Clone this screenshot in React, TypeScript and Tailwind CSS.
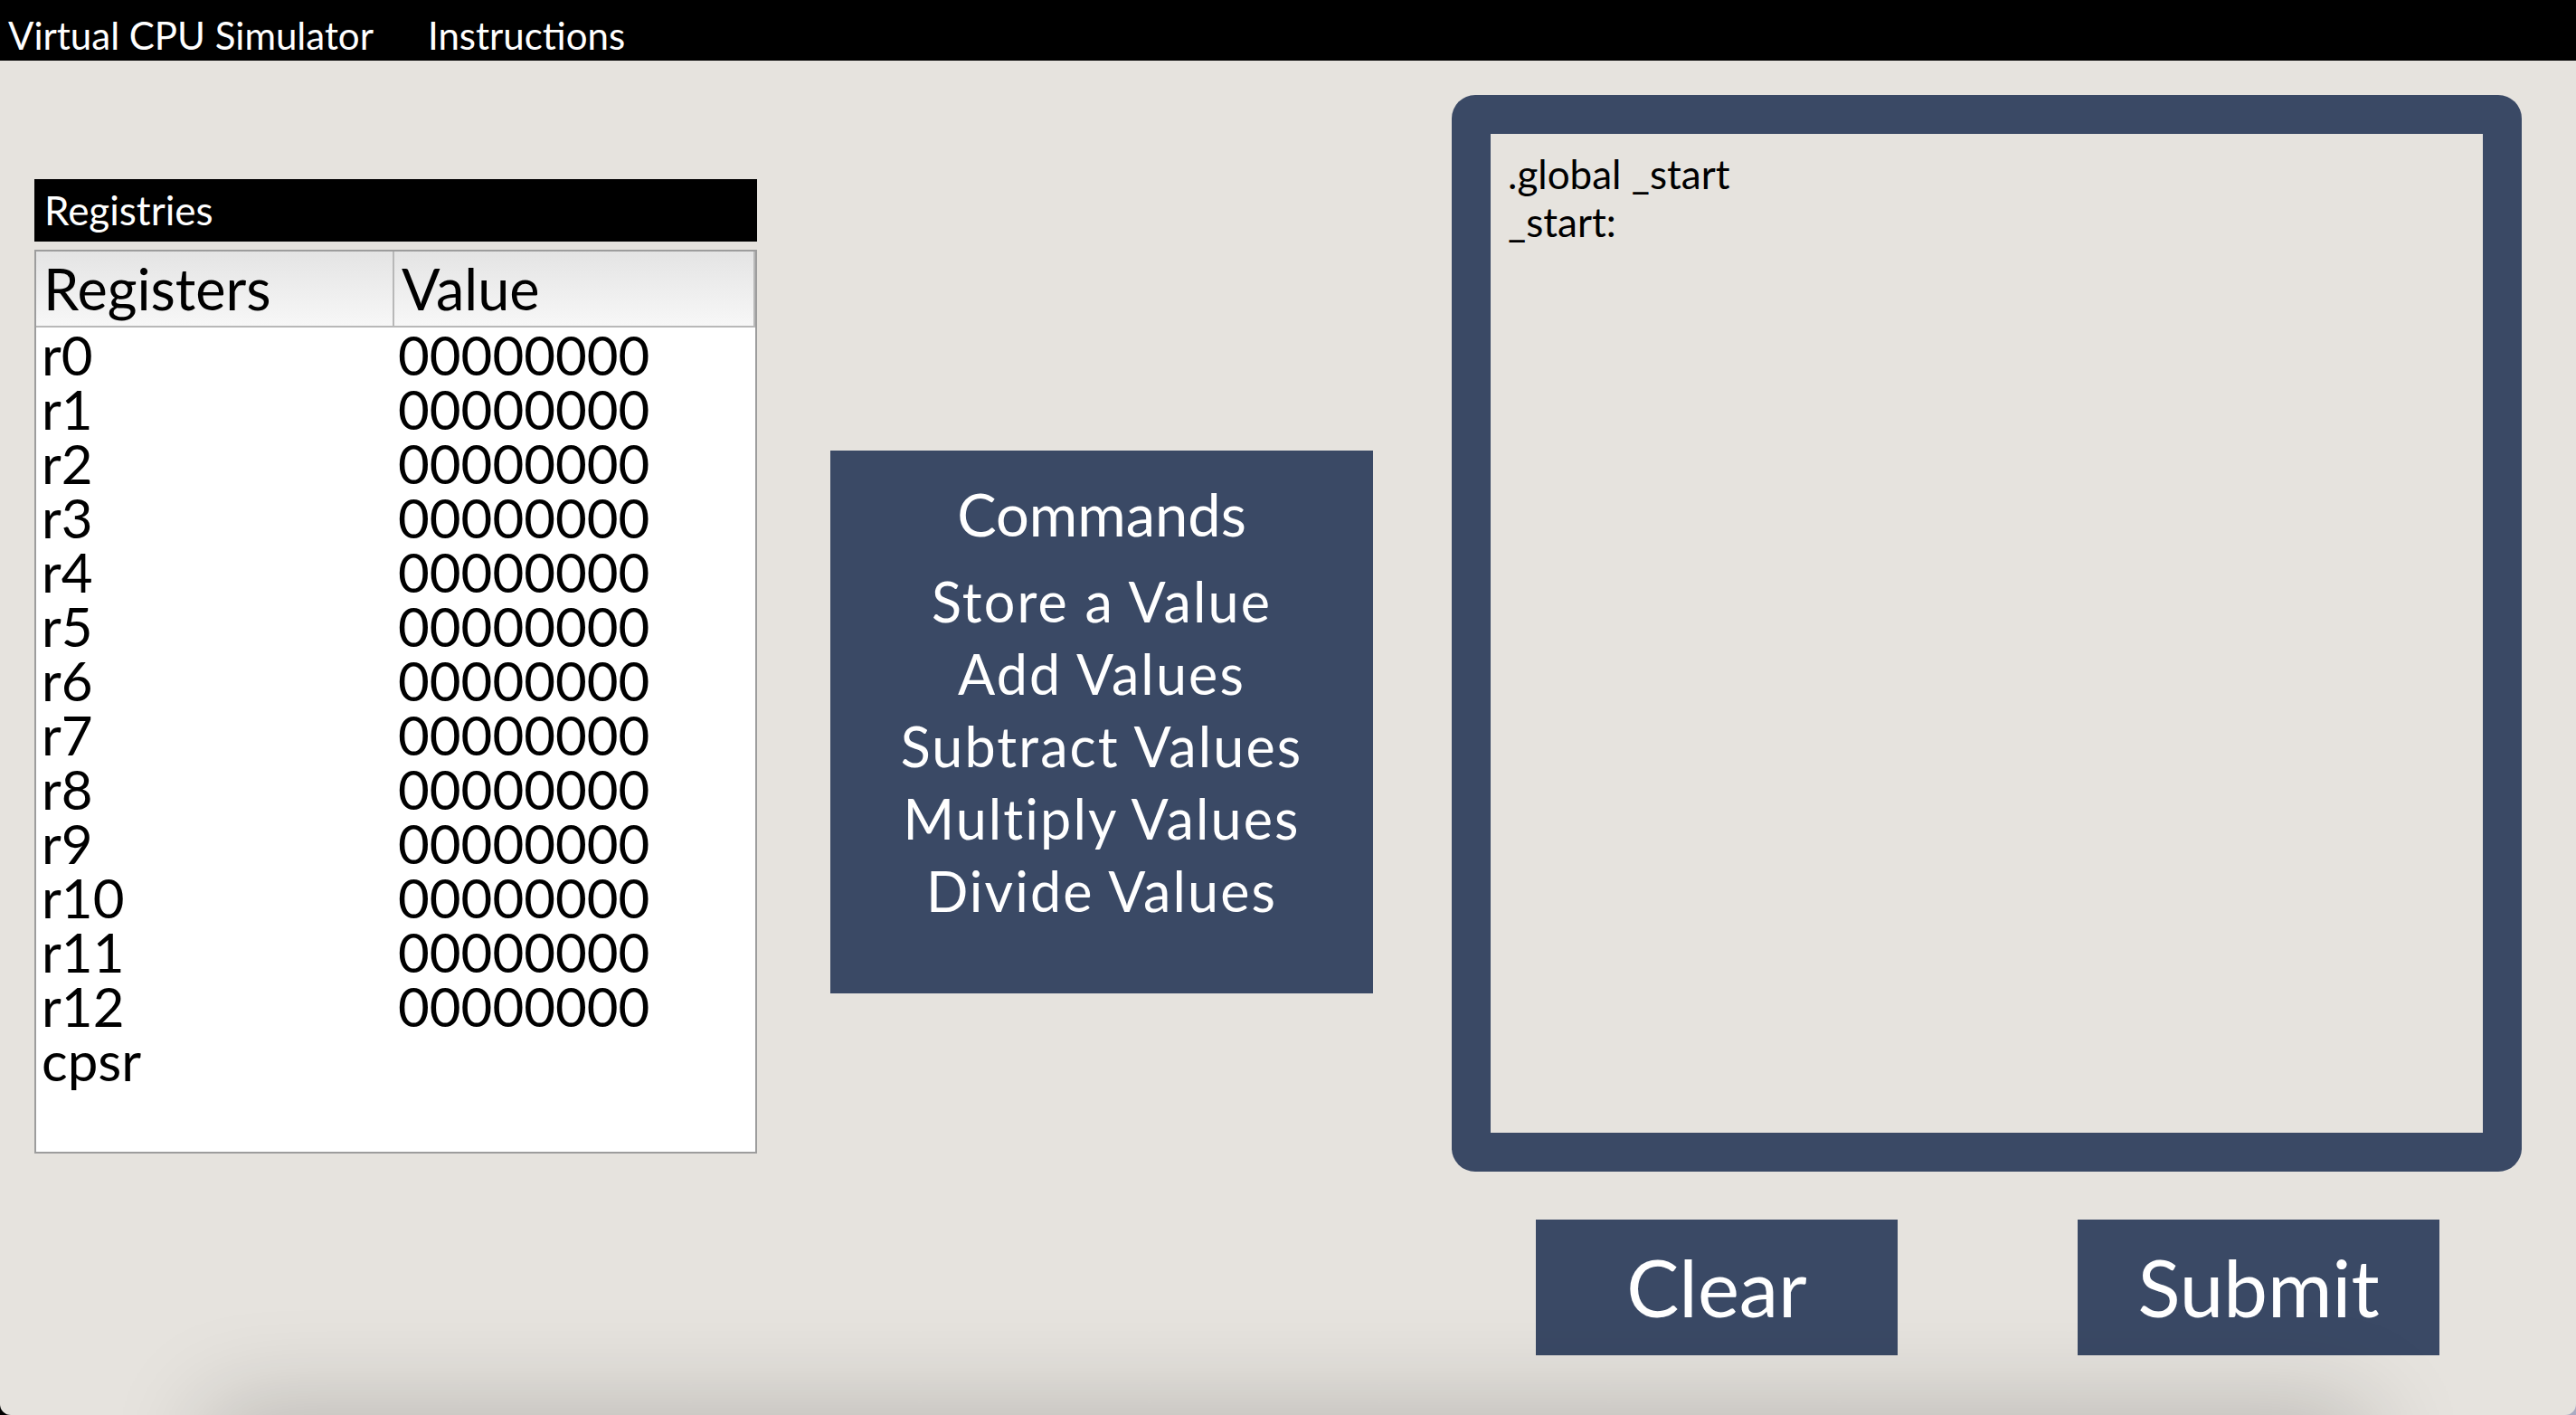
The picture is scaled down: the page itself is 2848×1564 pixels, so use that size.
import React from "react";

const registers = [
  "r0", "r1", "r2", "r3", "r4", "r5", "r6", "r7", "r8", "r9", "r10", "r11", "r12",
];

const commands = [
  "Store a Value",
  "Add Values",
  "Subtract Values",
  "Multiply Values",
  "Divide Values",
];

export default function App() {
  return (
    <div className="relative h-[1564px] w-[2848px] overflow-hidden bg-gradient-to-r from-black to-[#a9aac2] font-['Lato',sans-serif]">
      <div className="relative flex h-full flex-col overflow-hidden rounded-b-[12px] bg-[#e6e3de]">
        {/* menu bar */}
        <header className="flex h-[67px] shrink-0 gap-[60px] bg-black pl-[9px] pt-[12px] text-[42px] leading-[55px] text-white">
          <span>Virtual CPU Simulator</span>
          <span>Instructions</span>
        </header>

        <main className="flex flex-1 items-start">
          {/* registers */}
          <section className="ml-[38px] mt-[131px] flex w-[799px] flex-col">
            <div className="h-[69px] bg-black pl-[11px] text-[44px] leading-[69px] text-white">
              Registries
            </div>
            <div className="mt-[9px] h-[999px] border-2 border-[#9d9d9d] bg-white text-black">
              <div className="flex h-[84px] border-b-2 border-[#b8b8b8] bg-gradient-to-b from-[#e4e4e4] to-[#f7f7f7] text-[63px] leading-[82px]">
                <div className="w-[396px] border-r-2 border-[#b8b8b8] pl-[8px]">Registers</div>
                <div className="flex-1 border-r-2 border-[#b8b8b8] pl-[8px]">Value</div>
              </div>
              <div className="text-[60px] leading-[60px]">
                {registers.map((r) => (
                  <div key={r} className="flex h-[60px]">
                    <div className="w-[396px] pl-[6px]">{r}</div>
                    <div className="pl-[4px]">00000000</div>
                  </div>
                ))}
                <div className="flex h-[60px]">
                  <div className="w-[396px] pl-[6px]">cpsr</div>
                </div>
              </div>
            </div>
          </section>

          {/* commands */}
          <section className="ml-[81px] mt-[431px] flex h-[600px] w-[600px] flex-col items-center bg-[#3a4965] pt-[30px] text-white">
            <h2 className="text-[65px] leading-[80px]">Commands</h2>
            <ul className="mt-[17px] flex flex-col items-center text-[61px] leading-[80px] tracking-[0.035em]">
              {commands.map((c) => (
                <li key={c}>{c}</li>
              ))}
            </ul>
          </section>

          {/* editor */}
          <section className="ml-[87px] mt-[38px] flex w-[1183px] flex-col">
            <div className="h-[1190px] rounded-[26px] bg-[#3a4965] p-[43px]">
              <div className="h-full whitespace-pre bg-[#e6e3de] px-[19px] pt-[18px] text-[44px] leading-[53px] text-black">
                {".global _start\n_start:"}
              </div>
            </div>
            <div className="mt-[53px] flex justify-between pl-[93px] pr-[91px]">
              <button className="h-[150px] w-[400px] bg-[#3a4965] text-[87px] leading-[150px] text-white">Clear</button>
              <button className="h-[150px] w-[400px] bg-[#3a4965] text-[87px] leading-[150px] text-white">Submit</button>
            </div>
          </section>
        </main>

        {/* soft shadow along the bottom edge */}
        <div className="pointer-events-none absolute bottom-[-80px] left-[260px] right-[260px] h-[60px] shadow-[0_0_110px_30px_rgba(0,0,0,0.2)]" />
      </div>
    </div>
  );
}
